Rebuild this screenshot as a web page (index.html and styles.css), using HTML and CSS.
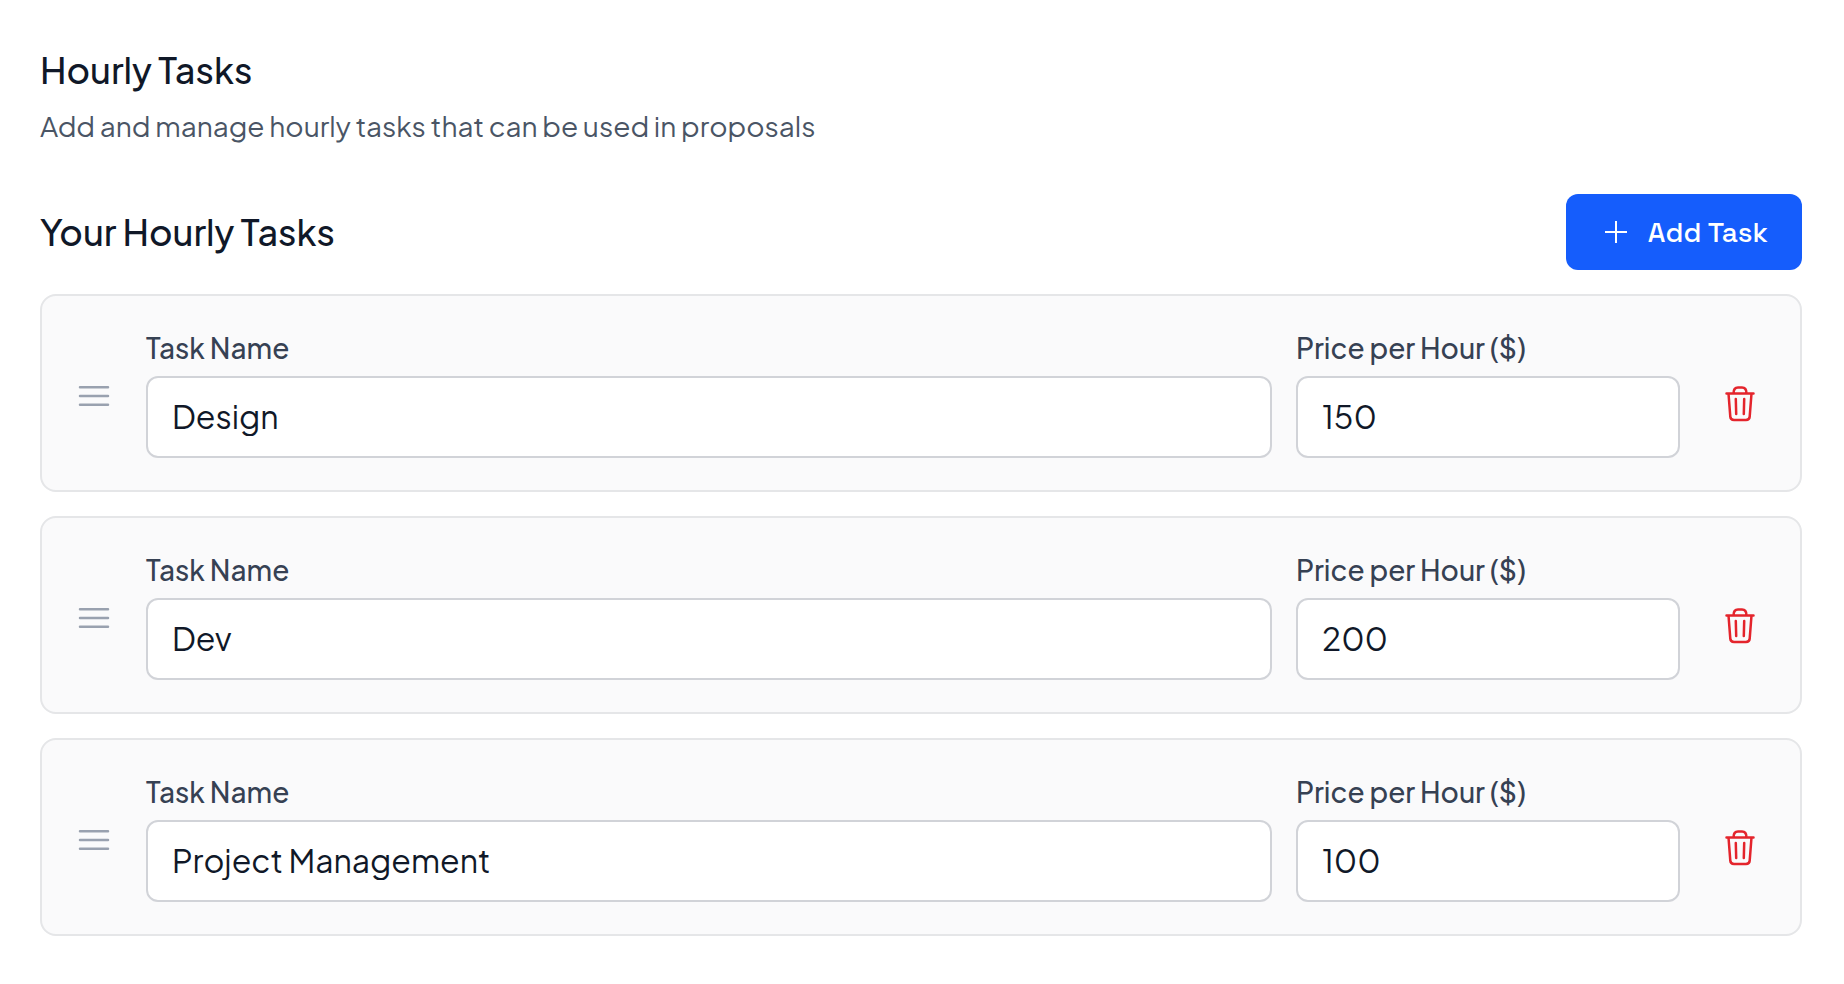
FILE: index.html
```html
<!DOCTYPE html>
<html lang="en">
<head>
<meta charset="utf-8">
<meta name="viewport" content="width=device-width, initial-scale=1">
<title>Hourly Tasks</title>
<link rel="stylesheet" href="styles.css">
</head>
<body>
<svg class="sprite" aria-hidden="true">
  <symbol id="icon-menu" viewBox="0 0 40 40"><path d="M6 11.250h28M6 20h28M6 28.750h28"/></symbol>
  <symbol id="icon-trash" viewBox="0 0 40 40"><path d="M6.500 9.500h27M8.500 9.500l1.800 23.200Q10.500 36 14 36h12q3.500 0 3.700-3.300L31.500 9.500M13.500 9.500Q13.500 3.500 18 3.500h4Q26.500 3.500 26.500 9.500M15.800 15l.4 15M24.200 15l-.4 15"/></symbol>
</svg>
<main class="page">
  <header class="page-header">
    <h1 class="title">Hourly Tasks</h1>
    <p class="subtitle">Add and manage hourly tasks that can be used in proposals</p>
  </header>
  <section>
    <div class="section-header">
      <h2 class="title">Your Hourly Tasks</h2>
      <button class="add-button" type="button">
        <svg class="plus-icon" viewBox="0 0 24 24" aria-hidden="true"><path d="M1 12h22M12 1v22"/></svg>
        <span>Add Task</span>
      </button>
    </div>
    <ul class="task-list">
      <li class="task">
        <button class="handle" type="button" aria-label="Reorder Design"><svg class="icon"><use href="#icon-menu"/></svg></button>
        <div class="field field-name"><label class="label" for="name-1">Task Name</label><input class="input" id="name-1" type="text" value="Design"></div>
        <div class="field field-price"><label class="label" for="price-1">Price per Hour ($)</label><input class="input" id="price-1" type="text" inputmode="decimal" value="150"></div>
        <button class="delete" type="button" aria-label="Delete Design"><svg class="icon"><use href="#icon-trash"/></svg></button>
      </li>
      <li class="task">
        <button class="handle" type="button" aria-label="Reorder Dev"><svg class="icon"><use href="#icon-menu"/></svg></button>
        <div class="field field-name"><label class="label" for="name-2">Task Name</label><input class="input" id="name-2" type="text" value="Dev"></div>
        <div class="field field-price"><label class="label" for="price-2">Price per Hour ($)</label><input class="input" id="price-2" type="text" inputmode="decimal" value="200"></div>
        <button class="delete" type="button" aria-label="Delete Dev"><svg class="icon"><use href="#icon-trash"/></svg></button>
      </li>
      <li class="task">
        <button class="handle" type="button" aria-label="Reorder Project Management"><svg class="icon"><use href="#icon-menu"/></svg></button>
        <div class="field field-name"><label class="label" for="name-3">Task Name</label><input class="input" id="name-3" type="text" value="Project Management"></div>
        <div class="field field-price"><label class="label" for="price-3">Price per Hour ($)</label><input class="input" id="price-3" type="text" inputmode="decimal" value="100"></div>
        <button class="delete" type="button" aria-label="Delete Project Management"><svg class="icon"><use href="#icon-trash"/></svg></button>
      </li>
    </ul>
  </section>
</main>
</body>
</html>
```
FILE: styles.css
```css
* { box-sizing: border-box; }

body {
  margin: 0;
  background: #fff;
  color: #101828;
  font-family: "Plus Jakarta Sans", Inter, "Open Sans", sans-serif;
  -webkit-font-smoothing: antialiased;
}

button, input { font: inherit; }

.sprite { display: none; }

.page { padding: 42px 42px 48px 40px; }

.page-header { margin-bottom: 48px; }

.title {
  margin: 0;
  font-size: 36px;
  font-weight: 500;
  line-height: 56px;
}

.subtitle {
  margin: 8px 0 0;
  color: #4a5565;
  font-size: 28px;
  line-height: 40px;
}

.section-header {
  display: flex;
  align-items: center;
  justify-content: space-between;
  margin-bottom: 24px;
}

.add-button {
  display: flex;
  align-items: center;
  gap: 20px;
  padding: 18px 34px 18px 38px;
  border: 0;
  border-radius: 12px;
  background: #155dfc;
  color: #fff;
  font-family: "Space Grotesk", Inter, sans-serif;
  font-size: 28px;
  font-weight: 500;
  line-height: 40px;
}

.plus-icon {
  width: 24px;
  height: 24px;
  fill: none;
  stroke: currentColor;
  stroke-width: 2;
}

.task-list {
  display: grid;
  gap: 24px;
  margin: 0;
  padding: 0;
  list-style: none;
}

.task {
  display: flex;
  align-items: center;
  gap: 24px;
  padding: 32px 24px;
  border: 2px solid #e5e6e8;
  border-radius: 16px;
  background: #fafafb;
}

.field {
  display: grid;
  gap: 8px;
  min-width: 0;
}

.field-name { flex: 1; }
.field-price { width: 384px; }

.label {
  color: #364153;
  font-size: 28px;
  font-weight: 500;
  line-height: 40px;
}

.input {
  width: 100%;
  height: 82px;
  padding: 0 24px 2px;
  border: 2px solid #d1d3d8;
  border-radius: 12px;
  background: #fff;
  color: #101828;
  font-size: 32px;
}

.handle, .delete {
  display: grid;
  place-items: center;
  border: 0;
  background: none;
}

.handle {
  width: 56px;
  padding: 6px 0 0;
  color: #99a1af;
}

.delete {
  width: 72px;
  padding: 22px 0 0;
  color: #e4242c;
}

.icon {
  width: 40px;
  height: 40px;
  fill: none;
  stroke: currentColor;
  stroke-width: 2.5;
  stroke-linecap: round;
  stroke-linejoin: round;
}
```
